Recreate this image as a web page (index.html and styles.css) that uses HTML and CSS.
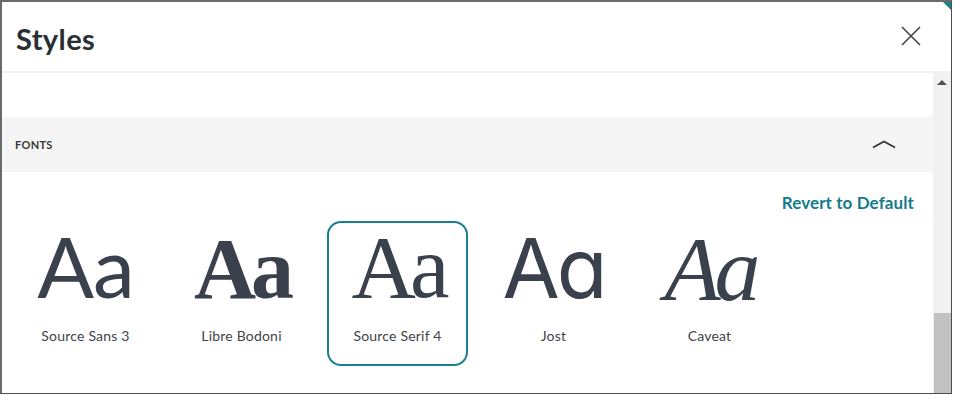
FILE: index.html
```html
<!DOCTYPE html>
<html lang="en">
<head>
<meta charset="utf-8">
<title>Styles</title>
<link rel="stylesheet" href="styles.css">
</head>
<body>
<div class="frame">
  <span class="corner"></span>
  <header class="head">
    <h1 class="title">Styles</h1>
    <button class="close" aria-label="Close">
      <svg width="20" height="20" viewBox="0 0 20 20"><path d="M1 1 L19 19 M19 1 L1 19" stroke="#444" stroke-width="1.6" fill="none"/></svg>
    </button>
  </header>
  <div class="body">
    <div class="content">
      <div class="spacer"></div>
      <div class="section-head">
        <span class="section-title">FONTS</span>
        <svg class="chev" width="24" height="10" viewBox="0 0 24 10"><polyline points="1,8.5 12,2.5 23,8.5" stroke="#333" stroke-width="1.8" fill="none"/></svg>
      </div>
      <div class="revert-row"><a class="revert">Revert to Default</a></div>
      <div class="cards">
        <div class="card"><span class="aa f-sans">Aa</span><span class="label">Source Sans 3</span></div>
        <div class="card"><span class="aa f-bodoni">Aa</span><span class="label">Libre Bodoni</span></div>
        <div class="card selected"><span class="aa f-serif">Aa</span><span class="label">Source Serif 4</span></div>
        <div class="card"><span class="aa f-jost">Aa</span><span class="label">Jost</span></div>
        <div class="card"><span class="aa f-caveat">Aa</span><span class="label">Caveat</span></div>
      </div>
    </div>
    <div class="scrollbar">
      <div class="sb-btn"><span class="sb-arrow"></span></div>
      <div class="sb-track"><div class="sb-thumb"></div></div>
    </div>
  </div>
</div>
</body>
</html>
```
FILE: styles.css
```css
* { box-sizing: border-box; }
html, body { margin: 0; padding: 0; background: #fff; }
body { font-family: Lato, "Open Sans", sans-serif; color: #2f343b; }

.frame {
  position: relative;
  width: 952px;
  height: 394px;
  border: 1px solid #4d4d4d;
  border-top: 2px solid #6a6a6a;
  border-left: 2px solid #6a6a6a;
  display: flex;
  flex-direction: column;
  overflow: hidden;
}
.corner {
  position: absolute;
  top: 0;
  right: 0;
  width: 0;
  height: 0;
  border-top: 8px solid #1f7f8c;
  border-left: 8px solid transparent;
}

.head {
  height: 71px;
  flex: none;
  display: flex;
  align-items: center;
  justify-content: space-between;
  padding: 0 30px 0 14px;
  border-bottom: 2px solid #f1f1f1;
}
.title {
  margin: 0;
  font-size: 29px;
  font-weight: 700;
  letter-spacing: 0.4px;
  color: #2a2f35;
  padding-top: 4px;
}
.close {
  background: none;
  border: 0;
  padding: 0;
  width: 20px;
  height: 20px;
  display: flex;
  margin-top: -2px;
}

.body {
  flex: 1;
  display: flex;
  min-height: 0;
}
.content {
  flex: 1;
  display: flex;
  flex-direction: column;
}
.spacer { height: 44px; flex: none; }
.section-head {
  height: 55px;
  background: #f5f5f5;
  display: flex;
  align-items: center;
  justify-content: space-between;
  padding: 0 37px 0 13px;
}
.section-title {
  font-size: 11px;
  font-weight: 700;
  color: #383838;
  letter-spacing: 0.3px;
}
.chev { margin-top: -2px; }

.revert-row {
  display: flex;
  justify-content: flex-end;
  padding-right: 19px;
  margin-top: 21px;
  height: 20px;
}
.revert {
  font-size: 17px;
  font-weight: 700;
  color: #137b8c;
  line-height: 20px;
  letter-spacing: 0.1px;
}

.cards {
  display: flex;
  gap: 15px;
  padding-left: 13px;
  margin-top: 8px;
}
.card {
  width: 141px;
  height: 145px;
  border: 2px solid transparent;
  border-radius: 14px;
  display: flex;
  flex-direction: column;
  align-items: center;
}
.card.selected { border-color: #1a7f93; }
.aa {
  display: block;
  height: 90px;
  line-height: 84px;
  color: #3b414c;
  white-space: nowrap;
  overflow: visible;
}
.f-sans { font-family: Lato, sans-serif; font-size: 84px; letter-spacing: -1px; padding-top: 1px; }
.f-bodoni { font-family: "Liberation Serif", serif; font-weight: 700; font-size: 86px; letter-spacing: -5px; padding-top: 4px; }
.f-serif { font-family: "Liberation Serif", serif; font-size: 89px; letter-spacing: -6px; padding-top: 2px; }
.f-jost { font-family: Inter, sans-serif; font-weight: 400; font-size: 83px; letter-spacing: -3px; font-feature-settings: "cv11" 1; padding-top: 3px; }
.f-caveat { font-family: "Liberation Serif", serif; font-style: italic; font-size: 92px; letter-spacing: -6px; padding-top: 4px; }
.label {
  margin-top: 14px;
  font-size: 14px;
  color: #40444a;
  letter-spacing: 0.2px;
}

.scrollbar {
  width: 18px;
  flex: none;
  background: #f1f1f1;
  display: flex;
  flex-direction: column;
}
.sb-btn {
  height: 18px;
  display: flex;
  align-items: center;
  justify-content: center;
}
.sb-arrow {
  width: 0;
  height: 0;
  border-left: 5px solid transparent;
  border-right: 5px solid transparent;
  border-bottom: 5px solid #505050;
}
.sb-track {
  flex: 1;
  display: flex;
  flex-direction: column;
  justify-content: flex-end;
}
.sb-thumb {
  height: 80px;
  margin-left: 1px;
  background: #c1c1c1;
}
```
